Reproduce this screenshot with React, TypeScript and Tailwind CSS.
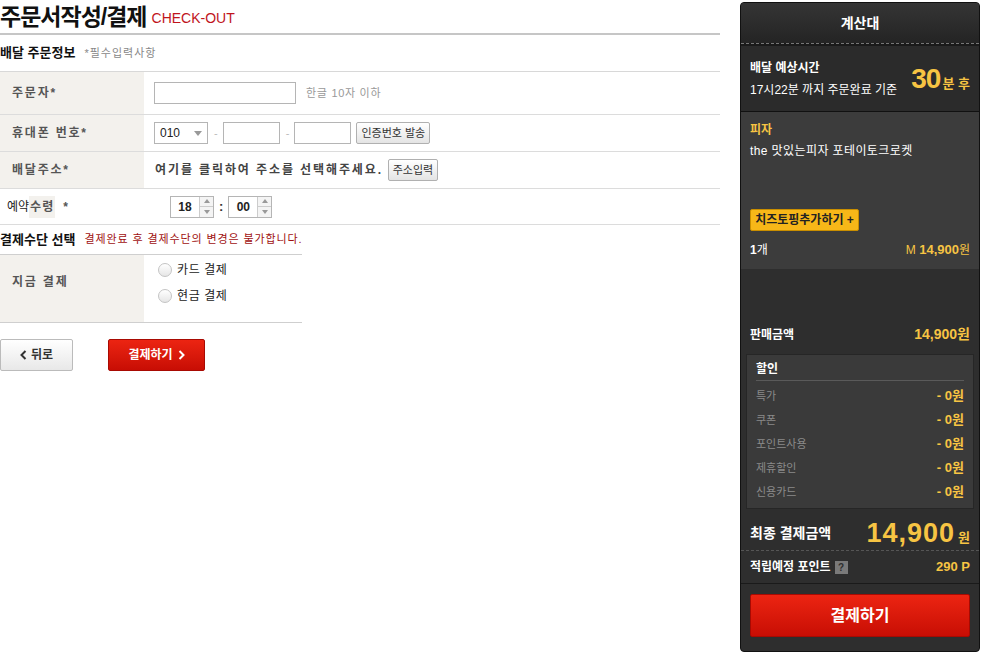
import type { ReactNode } from "react";

const font = "font-['Liberation_Sans','Noto_Sans_CJK_KR',sans-serif]";

function Label({ children, top }: { children: ReactNode; top?: boolean }) {
  return (
    <div
      className={`flex w-[144px] shrink-0 bg-[#f3f1ed] pl-[12px] text-[12px] font-bold tracking-[1.8px] text-[#555] ${top ? "items-start pt-[18px]" : "items-center"}`}
    >
      {children}
    </div>
  );
}

function TextBox({ w }: { w: string }) {
  return <div className={`h-[22px] border border-[#b5b5b5] bg-white ${w}`} />;
}

function GrayButton({ children, w }: { children: ReactNode; w: string }) {
  return (
    <div
      className={`flex h-[22px] items-center justify-center rounded-[2px] border border-[#b0b0b0] bg-gradient-to-b from-white to-[#e4e4e4] text-[11px] text-[#333] ${w}`}
    >
      {children}
    </div>
  );
}

function Spinner({ value }: { value: string }) {
  return (
    <div className="flex h-[22px] w-[44px] border border-[#b5b5b5] bg-white">
      <div className="flex flex-1 items-center justify-center text-[12px] font-bold text-[#222]">
        {value}
      </div>
      <div className="flex w-[14px] flex-col border-l border-[#ccc] bg-[#f4f4f4]">
        <div className="flex flex-1 items-center justify-center border-b border-[#ccc]">
          <svg width="6" height="4" viewBox="0 0 6 4">
            <path d="M0 4 L3 0 L6 4 Z" fill="#999" />
          </svg>
        </div>
        <div className="flex flex-1 items-center justify-center">
          <svg width="6" height="4" viewBox="0 0 6 4">
            <path d="M0 0 L3 4 L6 0 Z" fill="#999" />
          </svg>
        </div>
      </div>
    </div>
  );
}

function Radio({ children }: { children: ReactNode }) {
  return (
    <div className="flex items-center gap-[5px] text-[12px] tracking-[0.6px] text-[#222]">
      <div className="h-[14px] w-[14px] rounded-full border border-[#c4c4c4] bg-gradient-to-b from-white to-[#e6e6e6]" />
      {children}
    </div>
  );
}

function DiscountRow({ label }: { label: string }) {
  return (
    <div className="flex h-[24px] items-center justify-between">
      <span className="text-[11px] text-[#8a8a8a]">{label}</span>
      <span className="text-[13px] font-bold text-[#f7c443]">- 0원</span>
    </div>
  );
}

function Sidebar() {
  return (
    <div className="mt-[2px] ml-[20px] flex h-[650px] w-[240px] flex-col overflow-hidden rounded-[4px] border border-[#111] bg-[#2e2e2e] text-white">
      <div className="flex h-[40px] items-center justify-center bg-gradient-to-b from-[#353535] to-[#242424] text-[14px] font-bold">
        계산대
      </div>
      <div className="h-[3px] border-t border-dashed border-[#777] bg-[#1a1a1a]" />
      <div className="flex h-[66px] items-center justify-between border-b border-[#111] bg-[#2b2b2b] px-[9px]">
        <div className="flex flex-col gap-[6px] text-[12px] leading-[16px]">
          <span className="font-bold">배달 예상시간</span>
          <span>17시22분 까지 주문완료 기준</span>
        </div>
        <div className="flex items-baseline text-[#f7c443]">
          <span className="text-[28px] font-bold tracking-[-1px]">30</span>
          <span className="ml-[2px] text-[13px] font-bold">분 후</span>
        </div>
      </div>
      <div className="flex h-[157px] flex-col bg-[#3c3c3c] px-[9px] pt-[10px]">
        <span className="text-[12px] font-bold leading-[16px] text-[#f7c443]">피자</span>
        <span className="mt-[5px] text-[12px] leading-[16px] tracking-[0.4px]">the 맛있는피자 포테이토크로켓</span>
        <div className="mt-[50px] flex h-[22px] w-[109px] items-center justify-center rounded-[2px] border border-[#c98e00] bg-[#f7b718] text-[12px] font-bold text-[#222]">
          치즈토핑추가하기 +
        </div>
        <div className="mt-[11px] flex items-center justify-between text-[12px] leading-[16px]">
          <span>
            <b>1</b>개
          </span>
          <span className="text-[#f7c443]">
            M <b className="text-[13px]">14,900</b>원
          </span>
        </div>
      </div>
      <div className="flex flex-1 flex-col">
        <div className="mt-[55px] flex items-center justify-between px-[9px]">
          <span className="text-[12px] font-bold">판매금액</span>
          <span className="text-[14px] font-bold text-[#f7c443]">14,900원</span>
        </div>
        <div className="mx-[5px] mt-[9px] flex h-[155px] flex-col border border-[#262626] bg-[#3a3a3a] px-[9px] pt-[6px]">
          <div className="border-b border-[#5a5a5a] pb-[3px] text-[12px] font-bold leading-[16px]">할인</div>
          <div className="mt-[3px] flex flex-col">
            <DiscountRow label="특가" />
            <DiscountRow label="쿠폰" />
            <DiscountRow label="포인트사용" />
            <DiscountRow label="제휴할인" />
            <DiscountRow label="신용카드" />
          </div>
        </div>
        <div className="mt-[7px] flex h-[34px] items-center justify-between px-[9px]">
          <span className="text-[14px] font-bold">최종 결제금액</span>
          <span className="flex items-baseline text-[#f7c443]">
            <span className="text-[27px] font-bold tracking-[1px]">14,900</span>
            <span className="ml-[3px] text-[13px] font-bold">원</span>
          </span>
        </div>
        <div className="flex h-[33px] items-center justify-between border-t border-dashed border-[#555] px-[9px]">
          <span className="flex items-center gap-[4px] text-[12px] font-bold">
            적립예정 포인트
            <span className="flex h-[13px] w-[13px] items-center justify-center bg-[#7a7a7a] text-[10px] font-bold text-[#2e2e2e]">
              ?
            </span>
          </span>
          <span className="text-[13px] font-bold text-[#f7c443]">290 P</span>
        </div>
        <div className="border-t border-[#1a1a1a] px-[9px] pt-[10px]">
          <div className="flex h-[43px] items-center justify-center rounded-[2px] border border-[#a80a02] bg-gradient-to-b from-[#ec2412] to-[#c80d04] text-[16px] font-bold">
            결제하기
          </div>
        </div>
      </div>
    </div>
  );
}

export default function App() {
  return (
    <div className={`flex min-h-[658px] w-[987px] bg-white ${font}`}>
      <div className="flex w-[720px] flex-col">
        <div className="flex h-[35px] items-center gap-[5px] border-b-2 border-[#c6c6c6]">
          <span className="text-[23px] font-bold leading-[28px] tracking-[-1px] text-[#111]">주문서작성/결제</span>
          <span className="mt-[3px] text-[14px] text-[#c0141c]">CHECK-OUT</span>
        </div>
        <div className="flex h-[37px] items-center gap-[9px] border-b border-[#d8d8d8]">
          <span className="text-[13px] font-bold text-[#111]">배달 주문정보</span>
          <span className="text-[11px] tracking-[1px] text-[#888]">*필수입력사항</span>
        </div>
        <div className="flex h-[43px] border-b border-[#dcdcdc]">
          <Label>주문자*</Label>
          <div className="flex items-center gap-[10px] pl-[10px]">
            <TextBox w="w-[142px]" />
            <span className="text-[11px] tracking-[0.7px] text-[#999]">한글 10자 이하</span>
          </div>
        </div>
        <div className="flex h-[37px] border-b border-[#dcdcdc]">
          <Label>휴대폰 번호*</Label>
          <div className="flex items-center pl-[10px] text-[11px] text-[#bbb]">
            <div className="flex h-[22px] w-[54px] items-center justify-between border border-[#b5b5b5] px-[5px] text-[12px] text-[#222]">
              010
              <svg width="8" height="5" viewBox="0 0 8 5">
                <path d="M0 0 L4 5 L8 0 Z" fill="#999" />
              </svg>
            </div>
            <span className="ml-[6px] mr-[5px]">-</span>
            <TextBox w="w-[57px]" />
            <span className="ml-[6px] mr-[5px]">-</span>
            <TextBox w="w-[57px]" />
            <div className="ml-[5px]">
              <GrayButton w="w-[74px]">인증번호 발송</GrayButton>
            </div>
          </div>
        </div>
        <div className="flex h-[37px] border-b border-[#dcdcdc]">
          <Label>배달주소*</Label>
          <div className="flex items-center gap-[5px] pl-[11px]">
            <span className="text-[12px] font-bold tracking-[1.9px] text-[#444]">여기를 클릭하여 주소를 선택해주세요.</span>
            <GrayButton w="w-[50px]">주소입력</GrayButton>
          </div>
        </div>
        <div className="flex h-[36px] border-b border-[#dcdcdc]">
          <div className="flex w-[144px] shrink-0 items-center pl-[7px] text-[12px] text-[#222]">
            예약<span className="flex h-[22px] items-center bg-[#f3f1ed] px-[1px] font-bold tracking-[1px] text-[#555]">수령</span>
            <span className="ml-[8px] font-bold text-[#555]">*</span>
          </div>
          <div className="flex items-center gap-[5px] pl-[26px]">
            <Spinner value="18" />
            <span className="text-[13px] font-bold text-[#333]">:</span>
            <Spinner value="00" />
          </div>
        </div>
        <div className="flex h-[29px] items-center gap-[9px]">
          <span className="text-[13px] font-bold text-[#111]">결제수단 선택</span>
          <span className="text-[11px] tracking-[0.9px] text-[#a01010]">결제완료 후 결제수단의 변경은 불가합니다.</span>
        </div>
        <div className="flex h-[69px] w-[302px] border-y border-[#cfcfcf]">
          <Label top>지금 결제</Label>
          <div className="flex flex-col gap-[8px] pl-[14px] pt-[6px]">
            <Radio>카드 결제</Radio>
            <Radio>현금 결제</Radio>
          </div>
        </div>
        <div className="mt-[16px] flex gap-[35px]">
          <div className="flex h-[32px] w-[73px] items-center justify-center gap-[4px] rounded-[2px] border border-[#bbb] bg-gradient-to-b from-white to-[#e8e8e8] text-[12px] font-bold text-[#333]">
            <svg width="7" height="10" viewBox="0 0 7 10">
              <path d="M5.5 1 L1.5 5 L5.5 9" stroke="#333" strokeWidth="2" fill="none" />
            </svg>
            뒤로
          </div>
          <div className="flex h-[32px] w-[97px] items-center justify-center gap-[5px] rounded-[2px] border border-[#a80a02] bg-gradient-to-b from-[#ec2412] to-[#c80d04] text-[12px] font-bold text-white">
            결제하기
            <svg width="7" height="10" viewBox="0 0 7 10">
              <path d="M1.5 1 L5.5 5 L1.5 9" stroke="#fff" strokeWidth="2" fill="none" />
            </svg>
          </div>
        </div>
      </div>
      <Sidebar />
    </div>
  );
}
